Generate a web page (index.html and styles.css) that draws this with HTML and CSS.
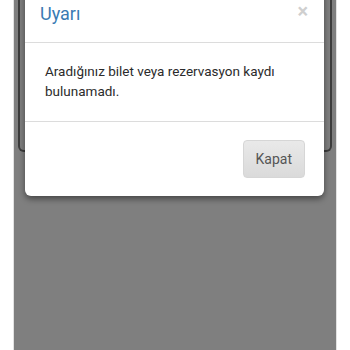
FILE: index.html
```html
<!DOCTYPE html>
<html lang="tr">
<head>
    <meta charset="UTF-8">
    <meta name="viewport" content="width=device-width, initial-scale=1.0">
    <title>Uyarı</title>
    <link rel="stylesheet" href="styles.css">
</head>
<body>
    <div class="screen">
        <div class="card"></div>

        <div class="modal">
            <div class="modal-header">
                <span class="close">&times;</span>
                <h4 class="modal-title">Uyarı</h4>
            </div>
            <div class="modal-body">
                Aradığınız bilet veya rezervasyon kaydı bulunamadı.
            </div>
            <div class="modal-footer">
                <button class="btn">Kapat</button>
            </div>
        </div>
    </div>
</body>
</html>
```

FILE: styles.css
```css
body {
    margin: 0;
    background-color: #fff;
    font-family: Roboto, "Liberation Sans", Arial, sans-serif;
}
.screen {
    position: relative;
    width: 322px;
    height: 350px;
    margin: 0 auto;
    padding: 0 4px;
    box-sizing: border-box;
    background-color: #7f7f7f;
    box-shadow: -1px 0 0 #e2e2e2, 1px 0 0 #e2e2e2;
    overflow: hidden;
}
.card {
    height: 152px;
    border: 2px solid #3c3c3c;
    border-top: none;
    border-radius: 0 0 6px 6px;
    box-sizing: border-box;
}
.modal {
    position: absolute;
    top: -14px;
    left: 11px;
    width: 299px;
    background-color: #fff;
    border-radius: 6px;
    box-shadow: 0 3px 6px rgba(0, 0, 0, 0.45);
}
.modal-header {
    padding: 15px;
    border-bottom: 1px solid #dcdcdc;
}
.modal-title {
    margin: 0;
    font-size: 18px;
    font-weight: 400;
    line-height: 26px;
    color: #3a7bb3;
}
.close {
    float: right;
    margin-right: 1px;
    font-size: 20px;
    font-weight: 700;
    line-height: 20px;
    color: #cfcfcf;
}
.modal-body {
    padding: 18px 20px 20px;
    font-size: 13.5px;
    line-height: 20px;
    color: #2b2b2b;
    border-bottom: 1px solid #dcdcdc;
}
.modal-footer {
    padding: 18px 19px 18px;
    text-align: right;
}
.btn {
    height: 38px;
    padding: 0 12px;
    font-family: Roboto, "Liberation Sans", Arial, sans-serif;
    font-size: 14px;
    color: #555;
    background: linear-gradient(#e9e9e9, #dadada);
    border: 1px solid #d6d6d6;
    border-radius: 4px;
}
```
